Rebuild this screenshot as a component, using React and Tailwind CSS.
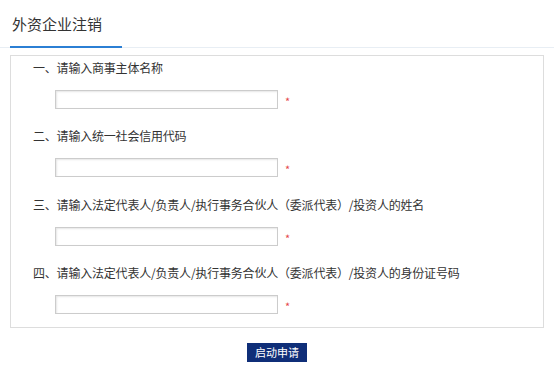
import React from 'react';

const items = [
  '一、请输入商事主体名称',
  '二、请输入统一社会信用代码',
  '三、请输入法定代表人/负责人/执行事务合伙人（委派代表）/投资人的姓名',
  '四、请输入法定代表人/负责人/执行事务合伙人（委派代表）/投资人的身份证号码',
];

const gaps = ['', 'mt-[19px]', 'mt-[20px]', 'mt-[19px]'];

export default function App() {
  return (
    <div className="w-[554px] h-[365px] bg-white text-[#333] font-['Noto_Sans_CJK_SC',sans-serif]">
      <div className="h-[48px] flex border-b border-[#e8eef4] px-[10px]">
        <div className="w-[112px] h-[48px] shrink-0 border-b-2 border-[#2b7fd4] pl-[2px] pt-[14px] text-[15px] leading-[20px] text-[#333]">
          外资企业注销
        </div>
      </div>

      <div className="mx-[10px] mt-[7px] border border-[#dddddd] pl-[22px] pt-[4px] pb-[13px]">
        {items.map((label, i) => (
          <div key={i} className={gaps[i]}>
            <div className="text-[12px] leading-[16px] text-[#333] tracking-[-0.2px]">{label}</div>
            <div className="mt-[14px] ml-[22px] flex items-center">
              <input
                type="text"
                className="w-[223px] h-[19px] border border-[#cccccc] bg-white shadow-[inset_1px_1px_2px_rgba(0,0,0,0.1)] outline-none"
              />
              <span className="ml-[7px] text-[11px] leading-none text-[#e5484d] pt-[3px]">*</span>
            </div>
          </div>
        ))}
      </div>

      <div className="mx-[10px] mt-[15px] flex justify-center">
        <button className="w-[60px] h-[19px] bg-[#0f2e78] text-white text-[11px] leading-[19px]">
          启动申请
        </button>
      </div>
    </div>
  );
}
